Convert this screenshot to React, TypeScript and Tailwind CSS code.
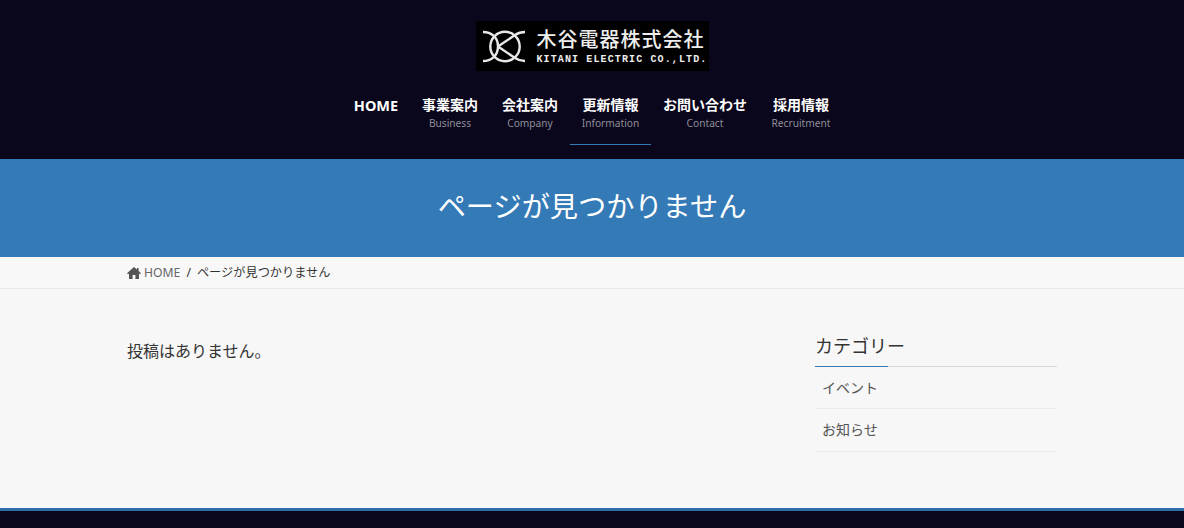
const font = "font-['Noto_Sans','Noto_Sans_CJK_JP',sans-serif]";

const navItems = [
  { ja: "事業案内", en: "Business", w: "w-[80px]" },
  { ja: "会社案内", en: "Company", w: "w-[80px]" },
  { ja: "更新情報", en: "Information", w: "w-[81px]", active: true },
  { ja: "お問い合わせ", en: "Contact", w: "w-[108px]" },
  { ja: "採用情報", en: "Recruitment", w: "w-[84px]" },
];

function Logo() {
  return (
    <div className="w-[233px] h-[50px] bg-black flex items-center pl-[2px] gap-[3px]">
      <svg width="56" height="42" viewBox="0 0 56 42" fill="none" stroke="#e8e8e8" strokeWidth="2.4" className="shrink-0">
        <circle cx="27" cy="21.5" r="14.7" />
        <path d="M5 7 C13 7 20 12 20 21.5 C20 31 13 36 5 36" />
        <path d="M20 21.5 L37 10 C40 8 43 7 47 7" />
        <path d="M20 21.5 L37 33 C40 35 43 36 47 36" />
      </svg>
      <div className="flex flex-col">
        <span className="text-[20px] leading-[24px] font-medium text-[#eeeeee] tracking-[1px] whitespace-nowrap">木谷電器株式会社</span>
        <span className="font-['Liberation_Mono',monospace] text-[10px] leading-[11px] mt-[2px] font-bold text-[#eeeeee] tracking-[1.12px] whitespace-nowrap">KITANI ELECTRIC CO.,LTD.</span>
      </div>
    </div>
  );
}

export default function App() {
  return (
    <div className={`${font} w-[1184px] h-[528px] overflow-hidden bg-[#f7f7f7] flex flex-col`}>
      <header className="h-[159px] bg-[#0a061c] flex flex-col items-center pt-[21px]">
        <Logo />
        <nav className="flex mt-[24px] pl-[1px]">
          <div className="w-[68px] h-[50px] text-center text-[14.5px] leading-[20px] font-bold text-white">HOME</div>
          {navItems.map((item) => (
            <div key={item.en} className={`${item.w} h-[50px] flex flex-col items-center border-b ${item.active ? "border-[#337ab7]" : "border-transparent"}`}>
              <span className="text-[14px] leading-[20px] font-bold text-white whitespace-nowrap">{item.ja}</span>
              <span className="text-[10.2px] leading-[16px] text-[#8f8f99] whitespace-nowrap">{item.en}</span>
            </div>
          ))}
        </nav>
      </header>

      <div className="h-[98px] bg-[#337ab7] flex items-center justify-center pb-[4px]">
        <h1 className="text-[28.2px] leading-none text-white">ページが見つかりません</h1>
      </div>

      <div className="h-[32px] bg-[#f8f8f8] border-b border-[#e8e8e8] pl-[127px] pt-[1px] flex items-center text-[12.2px]">
        <svg width="14" height="12" viewBox="0 0 14 12" className="mr-[3px] shrink-0 mt-[-1px]" fill="#555555">
          <path d="M7 0 L0 6.2 L1 7.2 L2 6.4 V12 H5.6 V8 H8.4 V12 H12 V6.4 L13 7.2 L14 6.2 L11.6 4 V1 H10 V2.6 Z" />
        </svg>
        <span className="text-[#666666]">HOME</span>
        <span className="text-[#333333] mx-[6px]">/</span>
        <span className="text-[#333333]">ページが見つかりません</span>
      </div>

      <main className="flex-1 flex pl-[127px] pt-[51px]">
        <p className="w-[688px] text-[16px] leading-[22px] text-[#333333]">投稿はありません。</p>
        <aside className="w-[242px]">
          <div className="relative h-[26px] mt-[-7px] border-b border-[#d9d9d9] pb-[7px] box-content">
            <h2 className="text-[18px] leading-[26px] text-[#333333]">カテゴリー</h2>
            <div className="absolute left-0 bottom-[-1px] w-[73px] h-px bg-[#337ab7]" />
          </div>
          <ul className="text-[14px] text-[#555555]">
            <li className="h-[42px] pl-[7px] flex items-center border-b border-[#ebebeb]">イベント</li>
            <li className="h-[43px] pl-[7px] pb-[2px] flex items-center border-b border-[#ebebeb]">お知らせ</li>
          </ul>
        </aside>
      </main>

      <footer className="h-[20px] bg-[#0a061c] border-t-[3px] border-[#2f6da6]" />
    </div>
  );
}
